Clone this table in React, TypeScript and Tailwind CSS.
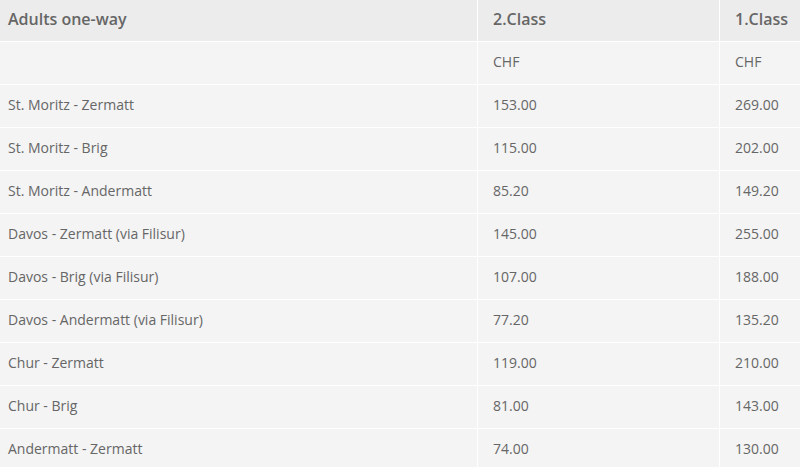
import React from "react";

const rows: [string, string, string][] = [
  ["St. Moritz - Zermatt", "153.00", "269.00"],
  ["St. Moritz - Brig", "115.00", "202.00"],
  ["St. Moritz - Andermatt", "85.20", "149.20"],
  ["Davos - Zermatt (via Filisur)", "145.00", "255.00"],
  ["Davos - Brig (via Filisur)", "107.00", "188.00"],
  ["Davos - Andermatt (via Filisur)", "77.20", "135.20"],
  ["Chur - Zermatt", "119.00", "210.00"],
  ["Chur - Brig", "81.00", "143.00"],
  ["Andermatt - Zermatt", "74.00", "130.00"],
];

export default function App() {
  return (
    <div
      className="w-[800px] h-[467px] overflow-hidden bg-white text-[#666]"
      style={{ fontFamily: '"Open Sans", "Noto Sans", sans-serif' }}
    >
      <div className="grid grid-cols-[477px_241px_1fr] gap-x-[1px] gap-y-[1px] bg-white">
        <div className="h-[41px] bg-[#ececec] pl-2 pb-[4px] flex items-center font-semibold text-[16px]">Adults one-way</div>
        <div className="h-[41px] bg-[#ececec] pl-[15px] pb-[4px] flex items-center font-semibold text-[16px]">2.Class</div>
        <div className="h-[41px] bg-[#ececec] pl-[15px] pb-[4px] flex items-center font-semibold text-[16px]">1.Class</div>

        <div className="h-[42px] bg-[#f4f4f4]"></div>
        <div className="h-[42px] bg-[#f4f4f4] pl-[15px] pb-[3px] flex items-center text-[14px]">CHF</div>
        <div className="h-[42px] bg-[#f4f4f4] pl-[15px] pb-[3px] flex items-center text-[14px]">CHF</div>

        {rows.map(([a, b, c]) => (
          <React.Fragment key={a}>
            <div className="h-[42px] bg-[#f4f4f4] pl-2 pb-[3px] flex items-center text-[14px]">{a}</div>
            <div className="h-[42px] bg-[#f4f4f4] pl-[15px] pb-[3px] flex items-center text-[14px]">{b}</div>
            <div className="h-[42px] bg-[#f4f4f4] pl-[15px] pb-[3px] flex items-center text-[14px]">{c}</div>
          </React.Fragment>
        ))}
      </div>
    </div>
  );
}
